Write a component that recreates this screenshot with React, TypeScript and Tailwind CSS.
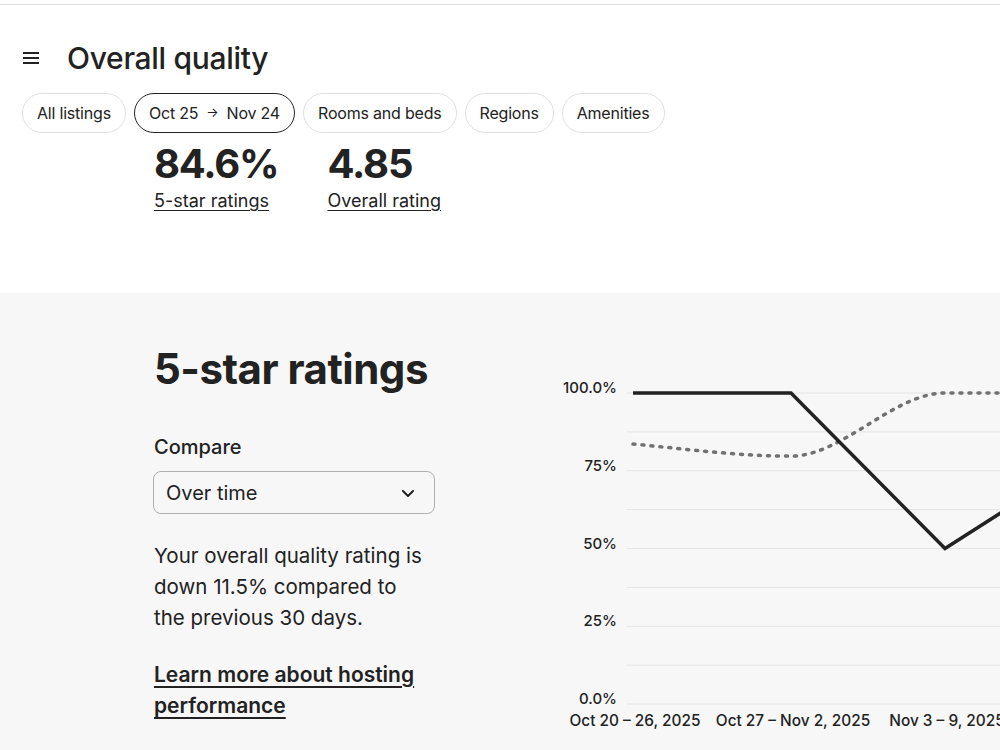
import React from "react";

const filters = [
  { label: "All listings", active: false },
  { label: "Oct 25", to: "Nov 24", active: true },
  { label: "Rooms and beds", active: false },
  { label: "Regions", active: false },
  { label: "Amenities", active: false },
];

// chart geometry (svg units, origin at chart column top-left)
const TOP = 22;
const BOTTOM = 333;
const yFor = (v: number) => BOTTOM - (v / 100) * (BOTTOM - TOP);
const gridYs = Array.from({ length: 9 }, (_, i) => TOP + (i * (BOTTOM - TOP)) / 8);
const xs = [73, 231, 385, 541];
const current = [100, 100, 50, 82];

const yLabels = [
  { v: 100, t: "100.0%" },
  { v: 75, t: "75%" },
  { v: 50, t: "50%" },
  { v: 25, t: "25%" },
  { v: 0, t: "0.0%" },
];

const weeks = ["Oct 20 – 26, 2025", "Oct 27 – Nov 2, 2025", "Nov 3 – 9, 2025"];

function Hamburger() {
  return (
    <svg width="16" height="12" viewBox="0 0 16 12" className="text-[#222]">
      <path d="M0 1h16M0 6h16M0 11h16" stroke="currentColor" strokeWidth="2" />
    </svg>
  );
}

function Chevron() {
  return (
    <svg width="14" height="10" viewBox="0 0 14 10" fill="none">
      <path d="M2 3l5 5 5-5" stroke="#222" strokeWidth="2" strokeLinecap="round" strokeLinejoin="round" />
    </svg>
  );
}

function RatingsChart() {
  const solid = current.map((v, i) => `${i ? "L" : "M"}${xs[i]},${yFor(v)}`).join(" ");
  const prev = `M73,${yFor(83.6)} C125.7,${yFor(82)} 178.3,${yFor(79.7)} 231,${yFor(79.7)} C282.3,${yFor(79.7)} 333.7,${yFor(100)} 385,${yFor(100)} C437,${yFor(100)} 489,${yFor(100)} 541,${yFor(100)}`;

  return (
    <svg width="440" height="380" className="block font-['Inter',sans-serif] shrink-0 overflow-hidden">
      {gridYs.map((y) => (
        <line key={y} x1="67" x2="600" y1={y} y2={y} stroke="#e4e4e4" strokeWidth="1" />
      ))}
      {yLabels.map((l) => (
        <text key={l.t} x="57" y={yFor(l.v)} textAnchor="end" fontSize="15" fontWeight="500" fill="#222">
          {l.t}
        </text>
      ))}
      <path d={prev} fill="none" stroke="#717171" strokeWidth="3.5" strokeDasharray="2 7" strokeLinecap="round" />
      <path d={solid} fill="none" stroke="#222" strokeWidth="3.5" strokeLinejoin="miter" />
      {weeks.map((w, i) => (
        <text key={w} x={xs[i] + 2} y="355" textAnchor="middle" fontSize="15.4" fontWeight="500" fill="#222">
          {w}
        </text>
      ))}
    </svg>
  );
}

export default function App() {
  return (
    <div className="w-[1000px] h-[750px] overflow-hidden bg-white text-[#222] font-['Inter',sans-serif]">
      <div className="h-1" />
      <div className="border-t border-[#e2e2e2]" />

      {/* page header */}
      <div className="flex items-center gap-7 pl-[23px] pt-[35px]">
        <Hamburger />
        <h1 className="text-[30px] leading-9 font-medium tracking-[-0.3px]">Overall quality</h1>
      </div>

      <div className="flex gap-2 pl-[22px] mt-[17px]">
        {filters.map((f) => (
          <button
            key={f.label}
            className={`h-10 px-[14px] rounded-full text-[16px] tracking-[-0.2px] flex items-center gap-2 bg-white ${
              f.active ? "border-[1.5px] border-[#222]" : "border border-[#e0e0e0]"
            }`}
          >
            <span>{f.label}</span>
            {f.to && (
              <>
                <span className="text-[13px]">→</span>
                <span>{f.to}</span>
              </>
            )}
          </button>
        ))}
      </div>

      {/* headline numbers */}
      <div className="flex gap-[49px] pl-[154px] mt-[8px]">
        <div>
          <div className="text-[40px] leading-[46px] font-bold tracking-[-1.2px]">84.6%</div>
          <a className="text-[18px] leading-7 underline underline-offset-[3px]">5-star ratings</a>
        </div>
        <div>
          <div className="text-[40px] leading-[46px] font-bold tracking-[-1.2px]">4.85</div>
          <a className="text-[18px] leading-7 underline underline-offset-[3px]">Overall rating</a>
        </div>
      </div>

      {/* detail section */}
      <div className="mt-[78px] bg-[#f7f7f7] h-[500px] flex">
        <div className="pl-[154px] w-[436px] shrink-0 pt-[52px]">
          <h2 className="text-[42px] leading-[48px] font-bold tracking-[-0.5px]">5-star ratings</h2>
          <div className="mt-[39px] text-[20px] font-medium">Compare</div>
          <div className="mt-[9px] h-[43px] w-[282px] -ml-px border border-[#b0b0b0] rounded-lg flex items-center justify-between pl-[12px] pr-[19px]">
            <span className="text-[20px]">Over time</span>
            <Chevron />
          </div>
          <p className="mt-[26px] w-[275px] text-[20.5px] leading-[31px]">
            Your overall quality rating is down 11.5% compared to the previous 30 days.
          </p>
          <a className="block mt-[26px] text-[21px] leading-[31px] font-semibold underline underline-offset-[4px]">
            Learn more about hosting performance
          </a>
        </div>
        <div className="pl-[124px] pt-[78px]">
          <RatingsChart />
        </div>
      </div>
    </div>
  );
}
